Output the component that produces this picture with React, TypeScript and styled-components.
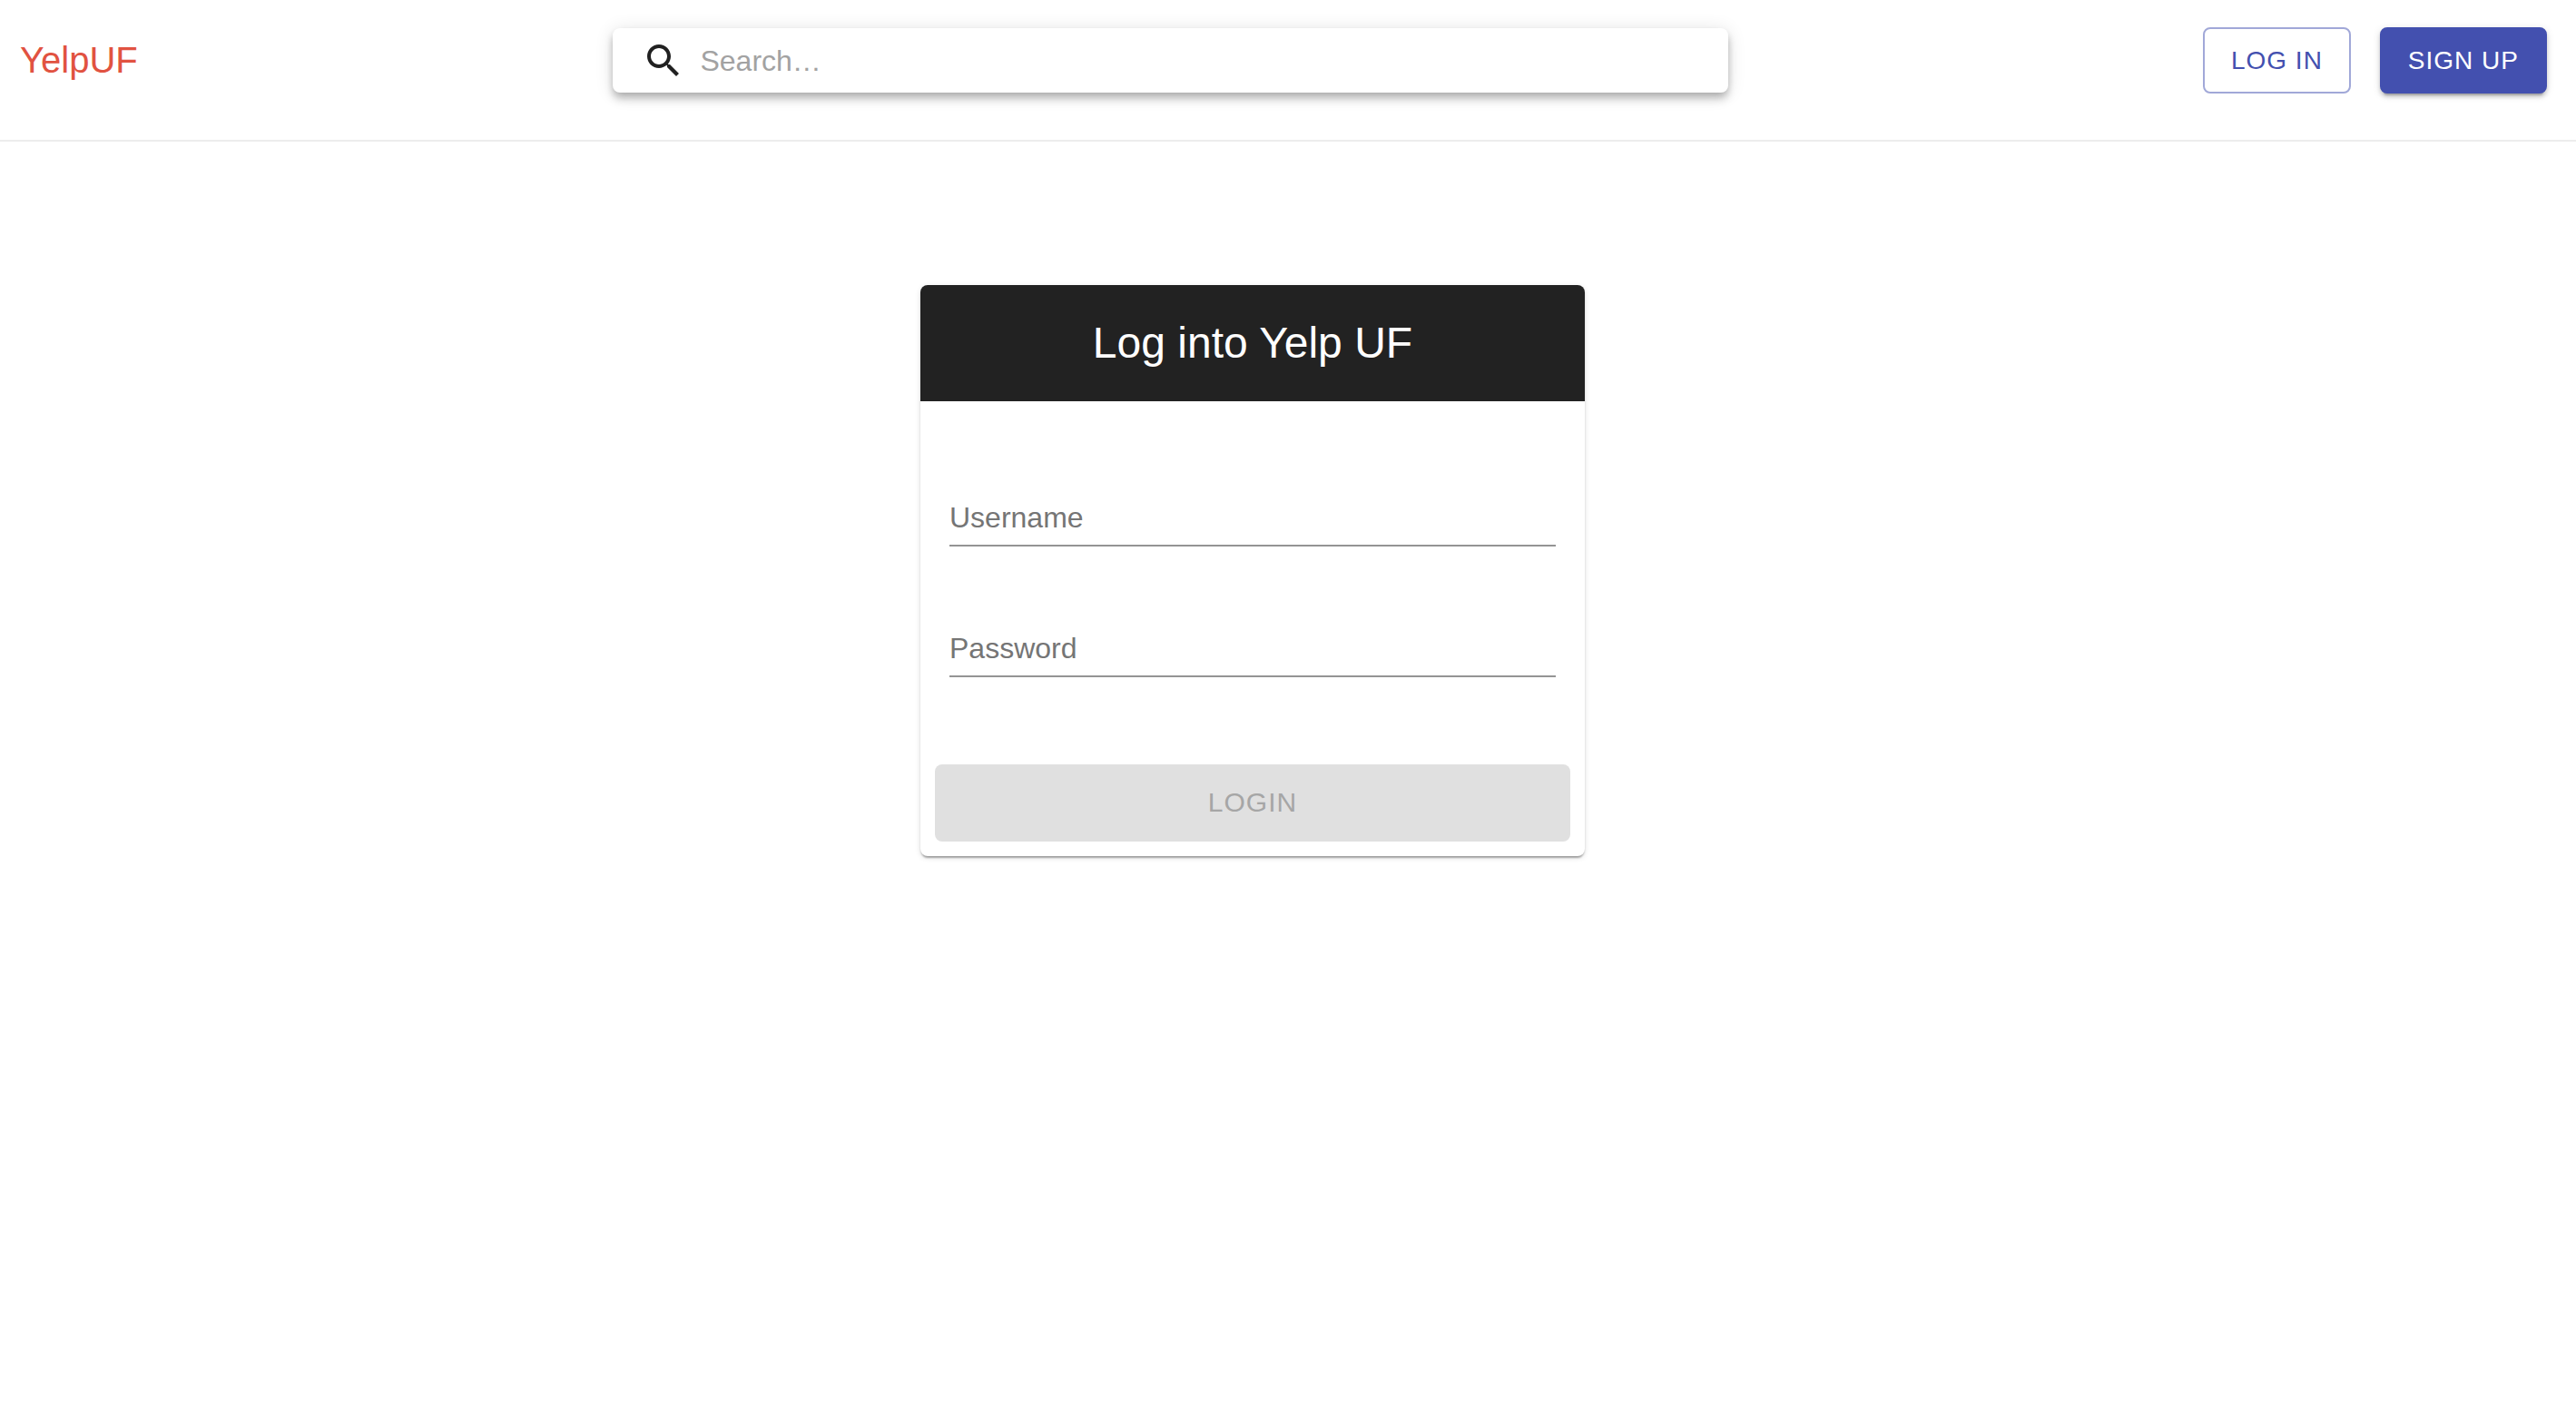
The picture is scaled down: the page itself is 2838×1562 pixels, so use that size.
import React, { useState } from "react";
import styled, { createGlobalStyle, css } from "styled-components";

const GlobalStyle = createGlobalStyle`
  *, *::before, *::after { box-sizing: border-box; }
  body {
    margin: 0;
    background: #fff;
    color: #212121;
    font-family: "Liberation Sans", Arial, Helvetica, sans-serif;
  }
  button, input { font: inherit; }
`;

const Header = styled.header`
  display: grid;
  grid-template-columns: 23.8% 43.3% 1fr;
  align-items: center;
  padding: 30px 0 51px;
  border-bottom: 2px solid #ededed;
`;

const Logo = styled.a`
  justify-self: start;
  padding-left: 22px;
  color: #e15241;
  font-size: 40px;
  line-height: 65px;
  text-decoration: none;
`;

const SearchBar = styled.form`
  display: flex;
  align-items: center;
  padding: 12px 32px 11px;
  border-radius: 8px;
  background: #fff;
  box-shadow:
    0 4px 8px -2px rgba(0, 0, 0, 0.2),
    0 8px 10px 0 rgba(0, 0, 0, 0.14),
    0 2px 20px 0 rgba(0, 0, 0, 0.12);
`;

const SearchIcon = styled.svg`
  flex: none;
  width: 48px;
  height: 48px;
  fill: #212121;
`;

const SearchInput = styled.input`
  flex: 1;
  min-width: 0;
  margin-left: 16px;
  padding: 0;
  border: 0;
  outline: 0;
  background: none;
  color: #212121;
  font-size: 32px;
  line-height: 38px;

  &::placeholder {
    color: #a2a2a2;
    opacity: 1;
  }
`;

const Actions = styled.nav`
  display: flex;
  justify-content: flex-end;
  gap: 32px;
  padding-right: 32px;
`;

const buttonBase = css`
  border-radius: 8px;
  letter-spacing: 1px;
  text-transform: uppercase;
  cursor: pointer;
`;

const HeaderButton = styled.button<{ $filled?: boolean }>`
  ${buttonBase}
  padding: 10px 29px;
  border: 2px solid ${(p) => (p.$filled ? "#4350af" : "#a1a8d8")};
  background: ${(p) => (p.$filled ? "#4350af" : "transparent")};
  color: ${(p) => (p.$filled ? "#fff" : "#4350af")};
  font-size: 28px;
  line-height: 49px;
  ${(p) =>
    p.$filled &&
    css`
      box-shadow:
        0 6px 2px -4px rgba(0, 0, 0, 0.2),
        0 4px 4px 0 rgba(0, 0, 0, 0.14),
        0 2px 10px 0 rgba(0, 0, 0, 0.12);
    `}
`;

const Main = styled.main`
  display: flex;
  justify-content: center;
  padding: 158px 78px 64px 0;
`;

const Card = styled.form`
  width: 100%;
  max-width: 732px;
  overflow: hidden;
  border-radius: 8px;
  background: #fff;
  box-shadow:
    0 4px 2px -2px rgba(0, 0, 0, 0.2),
    0 2px 2px 0 rgba(0, 0, 0, 0.14),
    0 2px 6px 0 rgba(0, 0, 0, 0.12);
`;

const CardTitle = styled.h1`
  margin: 0;
  padding: 32px;
  background: #222;
  color: #fff;
  font-size: 48px;
  font-weight: 400;
  line-height: 64px;
  text-align: center;
`;

const Fields = styled.div`
  display: grid;
  gap: 80px;
  padding: 96px 32px;
`;

const Field = styled.div`
  display: grid;
  border-bottom: 2px solid #949494;
`;

const fieldText = css`
  grid-area: 1 / 1;
  padding: 13px 0 11px;
  font-size: 32px;
  line-height: 38px;
`;

const FieldLabel = styled.label<{ $hidden: boolean }>`
  ${fieldText}
  color: #757575;
  pointer-events: none;
  visibility: ${(p) => (p.$hidden ? "hidden" : "visible")};
`;

const FieldInput = styled.input`
  ${fieldText}
  width: 100%;
  border: 0;
  outline: 0;
  background: none;
  color: #212121;
`;

const CardActions = styled.div`
  display: flex;
  padding: 0 16px 16px;
`;

const SubmitButton = styled.button`
  ${buttonBase}
  flex: 1;
  padding: 15px 44px 17px;
  border: 0;
  background: #4350af;
  color: #fff;
  font-size: 30px;
  line-height: 53px;

  &:disabled {
    background: #e0e0e0;
    color: #a6a6a6;
    cursor: default;
  }
`;

type TextFieldProps = {
  id: string;
  label: string;
  type: string;
  value: string;
  onChange: (value: string) => void;
};

function TextField({ id, label, type, value, onChange }: TextFieldProps) {
  return (
    <Field>
      <FieldLabel htmlFor={id} $hidden={value !== ""}>
        {label}
      </FieldLabel>
      <FieldInput id={id} type={type} value={value} onChange={(e) => onChange(e.target.value)} />
    </Field>
  );
}

export default function App() {
  const [username, setUsername] = useState("");
  const [password, setPassword] = useState("");

  return (
    <>
      <GlobalStyle />
      <Header>
        <Logo href="#">YelpUF</Logo>
        <SearchBar role="search" onSubmit={(e) => e.preventDefault()}>
          <SearchIcon viewBox="0 0 24 24" aria-hidden="true">
            <path d="M15.5 14h-.79l-.28-.27C15.41 12.59 16 11.11 16 9.5 16 5.91 13.09 3 9.5 3S3 5.91 3 9.5 5.91 16 9.5 16c1.61 0 3.09-.59 4.23-1.57l.27.28v.79l5 4.99L20.49 19l-4.99-5zm-6 0C7.01 14 5 11.99 5 9.5S7.01 5 9.5 5 14 7.01 14 9.5 11.99 14 9.5 14z" />
          </SearchIcon>
          <SearchInput type="text" aria-label="Search" placeholder="Search…" />
        </SearchBar>
        <Actions>
          <HeaderButton type="button">Log in</HeaderButton>
          <HeaderButton type="button" $filled>
            Sign up
          </HeaderButton>
        </Actions>
      </Header>
      <Main>
        <Card onSubmit={(e) => e.preventDefault()}>
          <CardTitle>Log into Yelp UF</CardTitle>
          <Fields>
            <TextField id="username" label="Username" type="text" value={username} onChange={setUsername} />
            <TextField id="password" label="Password" type="password" value={password} onChange={setPassword} />
          </Fields>
          <CardActions>
            <SubmitButton type="submit" disabled={!username || !password}>
              Login
            </SubmitButton>
          </CardActions>
        </Card>
      </Main>
    </>
  );
}
